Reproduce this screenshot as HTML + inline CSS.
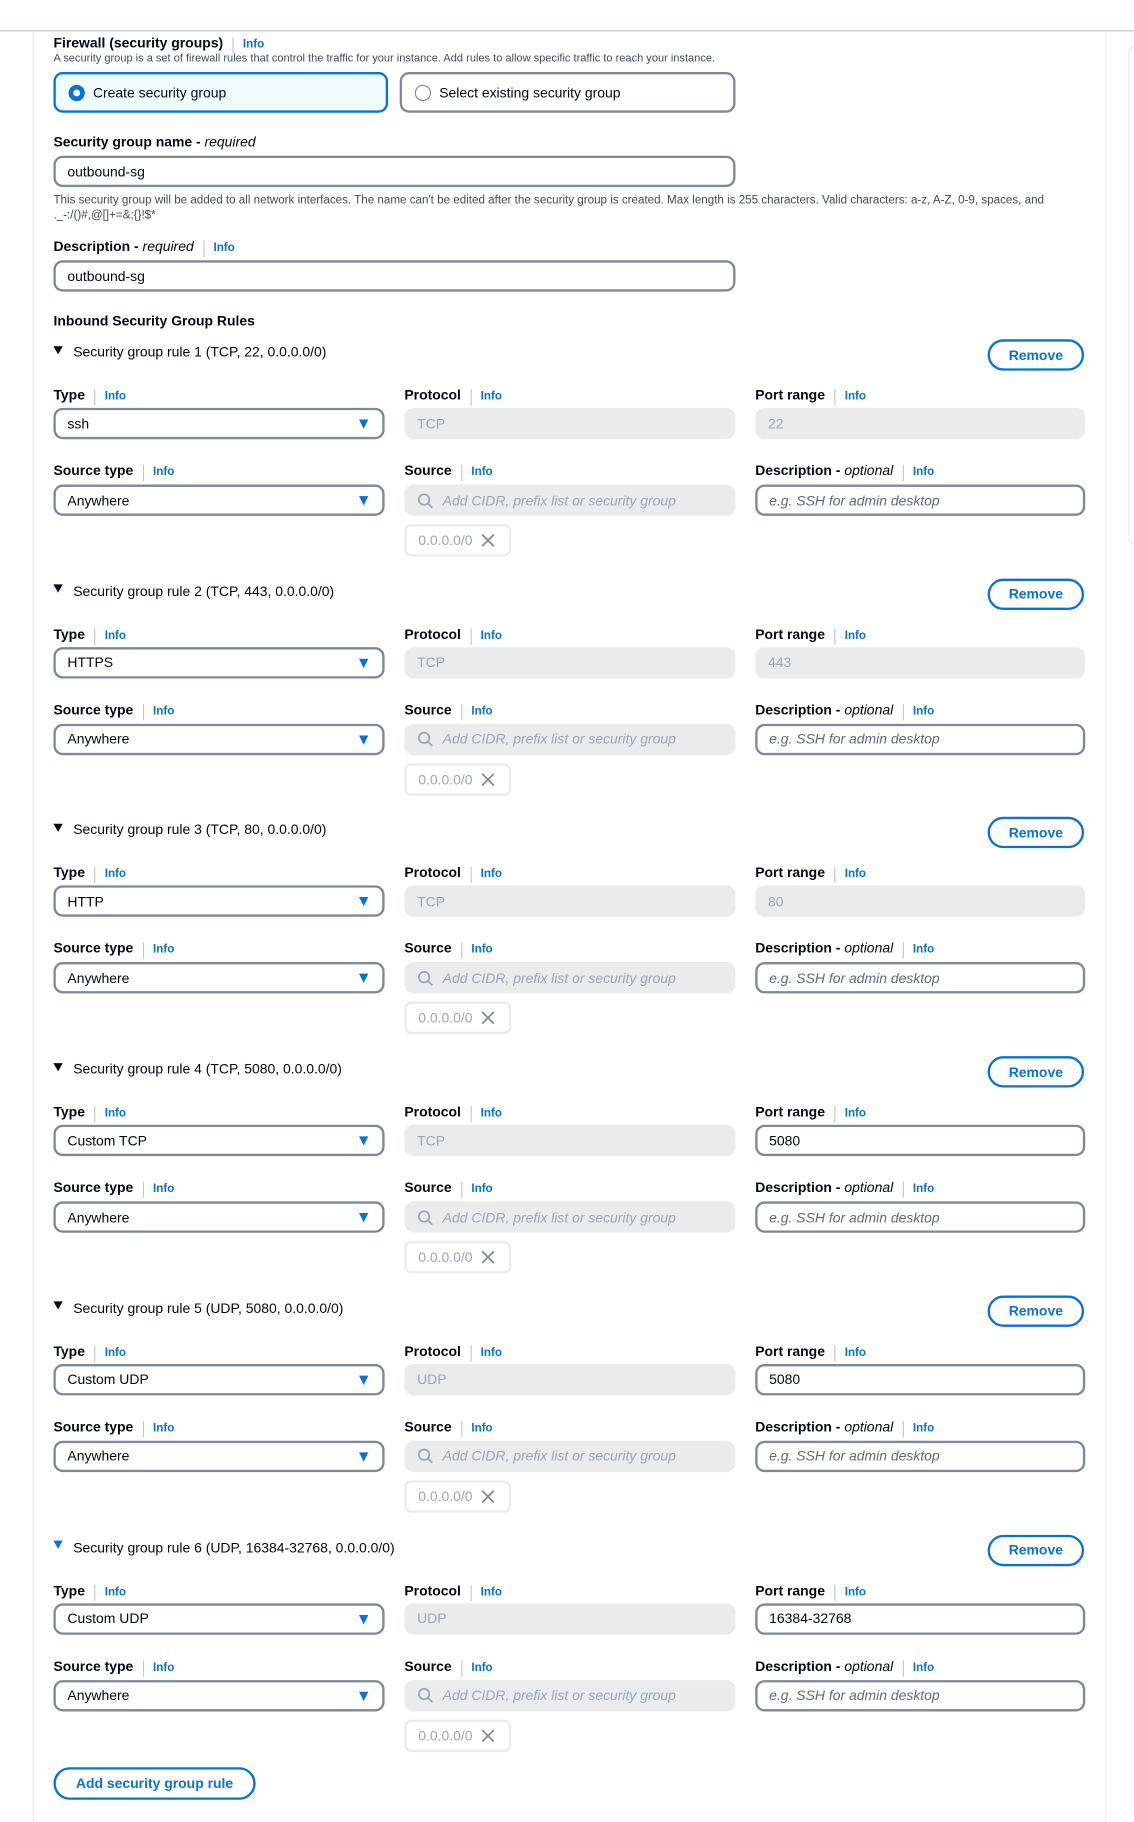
<!DOCTYPE html>
<html><head><meta charset="utf-8"><style>
*{box-sizing:border-box;margin:0;padding:0}
html,body{width:1134px;height:1822px;overflow:hidden;background:#fff}
#s{position:absolute;left:0;top:0;width:976px;height:1568px;transform:scale(1.16189);transform-origin:0 0;font-family:"Liberation Sans",sans-serif;color:#000716;font-size:12px}
.a{position:absolute}
.info{color:#0972d3;font-weight:bold;font-size:10px;border-left:1px solid #c6c6cd;padding-left:8px;margin-left:8px;line-height:14px}
.lab{position:absolute;display:flex;align-items:baseline;height:14px;line-height:14px;font-weight:bold;font-size:12px}
.lab i{font-weight:normal}
.inp{position:absolute;border:2px solid #7d8998;border-radius:8px;height:27px;display:flex;align-items:center;padding-left:10px;font-size:12px;background:#fff}
.dis{position:absolute;border-radius:8px;height:27px;display:flex;align-items:center;padding-left:11px;font-size:12px;background:#e9ebed;color:#9ba7b6}
.ph{color:#5f6b7a;font-style:italic}
.tri{position:absolute;right:12px;top:8px;width:0;height:0;border-left:4.5px solid transparent;border-right:4.5px solid transparent;border-top:8px solid #0972d3}
.rm{position:absolute;left:850px;width:83px;height:27px;border:2px solid #0972d3;border-radius:14px;color:#0972d3;font-weight:bold;display:flex;align-items:center;justify-content:center;font-size:12px}
.chip{position:absolute;left:348px;width:92px;height:28px;border:2px solid #e9ebed;border-radius:6px;color:#9ba7b6;display:flex;align-items:center;padding-left:10px;font-size:12px}
.hd{position:absolute;left:46px;display:flex;align-items:center;font-size:12px;color:#000716}
.ht{width:0;height:0;border-left:4.5px solid transparent;border-right:4.5px solid transparent;border-top:7px solid #000716;margin-right:9px;margin-top:-4px}
</style></head><body><div id="s">
<div class="a" style="left:0;top:26px;width:976px;height:1px;background:#b6bec9"></div>
<div class="a" style="left:28px;top:27px;width:1px;height:1541px;background:#e9ebed"></div>
<div class="a" style="left:951px;top:27px;width:1px;height:1541px;background:#e9ebed"></div>
<div class="a" style="left:971px;top:40px;width:10px;height:428px;border:1px solid #e9ebed;border-radius:8px"></div>

<div class="lab" style="left:46px;top:30px">Firewall (security groups)<span class="info">Info</span></div>
<div class="a" style="left:46px;top:45px;font-size:9.5px;color:#414d5c">A security group is a set of firewall rules that control the traffic for your instance. Add rules to allow specific traffic to reach your instance.</div>
<div class="a" style="left:46px;top:62px;width:288px;height:35px;border:2px solid #0972d3;border-radius:8px;background:#f0fbff;display:flex;align-items:center;padding-left:11px"><span style="width:14px;height:14px;border-radius:50%;border:4px solid #0972d3;background:#fff;margin-right:7px"></span>Create security group</div>
<div class="a" style="left:344px;top:62px;width:289px;height:35px;border:2px solid #7d8998;border-radius:8px;display:flex;align-items:center;padding-left:11px"><span style="width:14px;height:14px;border-radius:50%;border:1.5px solid #7d8998;margin-right:7px"></span>Select existing security group</div>

<div class="lab" style="left:46px;top:115px">Security group name -&nbsp;<i>required</i></div>
<div class="inp" style="left:46px;top:134px;width:587px">outbound-sg</div>
<div class="a" style="left:46px;top:166px;width:890px;font-size:10px;line-height:13px;color:#414d5c">This security group will be added to all network interfaces. The name can't be edited after the security group is created. Max length is 255 characters. Valid characters: a-z, A-Z, 0-9, spaces, and ._-:/()#,@[]+=&amp;;{}!$*</div>
<div class="lab" style="left:46px;top:205px">Description -&nbsp;<i>required</i><span class="info">Info</span></div>
<div class="inp" style="left:46px;top:224px;width:587px">outbound-sg</div>
<div class="lab" style="left:46px;top:269px">Inbound Security Group Rules</div>

<div id="rules"></div>
<div class="a" style="left:46px;top:1521px;width:174px;height:28px;border:2px solid #0972d3;border-radius:14px;color:#0972d3;font-weight:bold;display:flex;align-items:center;justify-content:center">Add security group rule</div>
</div>
<script>
var R=[["1 (TCP, 22, 0.0.0.0/0)","ssh","TCP","22",1],["2 (TCP, 443, 0.0.0.0/0)","HTTPS","TCP","443",1],["3 (TCP, 80, 0.0.0.0/0)","HTTP","TCP","80",1],["4 (TCP, 5080, 0.0.0.0/0)","Custom TCP","TCP","5080",0],["5 (UDP, 5080, 0.0.0.0/0)","Custom UDP","UDP","5080",0],["6 (UDP, 16384-32768, 0.0.0.0/0)","Custom UDP","UDP","16384-32768",0]];
var h="";
R.forEach(function(r,i){var H=303+205.7*i;
var tc=i==5?"#0972d3":"#000716";
h+='<div class="hd" style="top:'+(H-7)+'px"><span class="ht" style="border-top-color:'+tc+'"></span>Security group rule '+r[0]+'</div>';
h+='<div class="rm" style="top:'+(H-11)+'px">Remove</div>';
h+='<div class="lab" style="left:46px;top:'+(H+30)+'px">Type<span class="info">Info</span></div>';
h+='<div class="lab" style="left:348px;top:'+(H+30)+'px">Protocol<span class="info">Info</span></div>';
h+='<div class="lab" style="left:650px;top:'+(H+30)+'px">Port range<span class="info">Info</span></div>';
h+='<div class="inp" style="left:46px;top:'+(H+48)+'px;width:285px">'+r[1]+'<span class="tri"></span></div>';
h+='<div class="dis" style="left:348px;top:'+(H+48)+'px;width:285px">'+r[2]+'</div>';
h+=r[4]?'<div class="dis" style="left:650px;top:'+(H+48)+'px;width:284px">'+r[3]+'</div>':'<div class="inp" style="left:650px;top:'+(H+48)+'px;width:284px">'+r[3]+'</div>';
h+='<div class="lab" style="left:46px;top:'+(H+95)+'px">Source type<span class="info">Info</span></div>';
h+='<div class="lab" style="left:348px;top:'+(H+95)+'px">Source<span class="info">Info</span></div>';
h+='<div class="lab" style="left:650px;top:'+(H+95)+'px">Description -&nbsp;<i>optional</i><span class="info">Info</span></div>';
h+='<div class="inp" style="left:46px;top:'+(H+114)+'px;width:285px">Anywhere<span class="tri"></span></div>';
h+='<div class="dis" style="left:348px;top:'+(H+114)+'px;width:285px;font-style:italic"><svg width="14" height="14" viewBox="0 0 14 14" style="margin-right:8px"><circle cx="6" cy="6" r="4.5" fill="none" stroke="#9ba7b6" stroke-width="1.5"/><path d="M9.3 9.3L13 13" stroke="#9ba7b6" stroke-width="1.5"/></svg>Add CIDR, prefix list or security group</div>';
h+='<div class="inp" style="left:650px;top:'+(H+114)+'px;width:284px"><span class="ph">e.g. SSH for admin desktop</span></div>';
h+='<div class="chip" style="top:'+(H+148)+'px">0.0.0.0/0<svg width="12" height="12" viewBox="0 0 12 12" style="margin-left:7px"><path d="M1 1L11 11M11 1L1 11" stroke="#7d8998" stroke-width="1.5"/></svg></div>';
});
document.getElementById("rules").outerHTML=h;
</script>
</body></html>
